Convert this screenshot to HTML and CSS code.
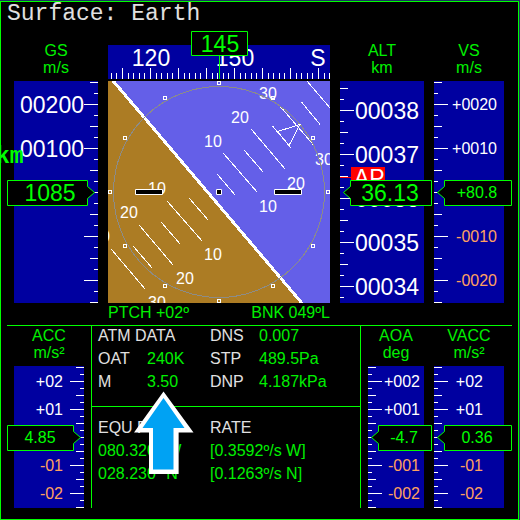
FILE: index.html
```html
<!DOCTYPE html>
<html lang="en">
<head>
<meta charset="utf-8">
<title>Surface: Earth</title>
<link rel="stylesheet" href="styles.css">
</head>
<body>
<main class="mfd">
  <h1 class="title">Surface: Earth</h1>

  <section class="flight">
    <div class="gauge raised">
      <h2 class="caption caption-gs">GS<br>m/s</h2>
      <svg class="tape" viewBox="7 81 91 222">
        <rect class="band" x="14" y="81" width="84" height="222"/>
        <path class="tick short" stroke-dasharray="1 10" d="M96 82V303"/>
        <path class="tick mid" stroke-dasharray="1 21" d="M94 82V303"/>
        <path class="tick major" stroke-dasharray="1 43" d="M91 104V303"/>
        <g class="big end">
          <text x="84" y="113">00200</text>
          <text x="84" y="157">00100</text>
        </g>
        <path class="readout" d="M7.500 180.500H87.500V186.500L94.500 192.500L87.500 198.500V205.500H7.500Z"/>
        <text class="big value" x="50" y="201">1085</text>
      </svg>
    </div>

    <div class="attitude">
      <svg class="compass" viewBox="108 31 222 48">
        <rect class="band" x="108" y="45" width="222" height="34"/>
        <path class="tick compass-short" stroke-dasharray="1 4.600" d="M110.800 76H330"/>
        <path class="tick compass-major" stroke-dasharray="1 27" d="M122 73.500H330"/>
        <g class="big middle">
          <text x="151" y="66">120</text>
          <text x="235" y="66">150</text>
          <text x="318" y="66">S</text>
        </g>
        <path class="readout" d="M191.500 31.500H247.500V55.500H191.500ZM219.500 55.500V79"/>
        <text class="big value" x="220" y="52">145</text>
      </svg>
      <svg class="horizon" viewBox="108 81 222 222">
        <rect class="sky" x="108" y="81" width="222" height="222"/>
        <path class="ground" d="M108 81H113.500L301.500 303H108Z"/>
        <path class="horizon-line" d="M111.500 79L303.500 305"/>
        <path class="ladder" d="M307 81L330 108M301.500 102L320 124.500M279 105L313.500 145M272.500 126L291.500 148.500M251.500 129.500L285.500 169.500M244.500 150.500L263.500 172.500M223.500 153.500L257.500 192.500M217.500 174.500L235.500 195.500M189.500 198.500L208.500 220.500M167.500 201.500L202.500 241.500M161.500 222.500L180.500 244.500M139.500 225.500L173.500 265.500M133.500 246.500L152.500 268.500M111.500 249.500L145.500 289.500"/>
        <g class="small middle">
          <text x="268" y="99">30</text>
          <text x="240" y="123">20</text>
          <text x="213" y="147">10</text>
          <text x="324" y="165">30</text>
          <text x="296" y="189">20</text>
          <text x="268" y="212">10</text>
          <text x="157" y="194">10</text>
          <text x="129" y="218">20</text>
          <text x="101" y="242">30</text>
          <text x="213" y="260">10</text>
          <text x="185" y="284">20</text>
          <text x="157" y="308">30</text>
        </g>
        <circle class="ring" cx="219" cy="192" r="105.500"/>
        <path class="ladder" d="M300 124.500L277.500 131.500L289 145.500Z"/>
        <path class="marker" d="M217.500 81.500h3v3h-3zM163.500 96.500h3v3h-3zM123.500 136.500h3v3h-3zM108.500 190.500h3v3h-3zM123.500 244.500h3v3h-3zM163.500 284.500h3v3h-3zM217.500 299.500h3v3h-3zM271.500 284.500h3v3h-3zM311.500 244.500h3v3h-3zM326.500 190.500h3v3h-3zM311.500 136.500h3v3h-3zM271.500 96.500h3v3h-3z"/>
        <path class="wings" d="M135.500 189.500h27v5h-27zM274.500 189.500h27v5h-27zM216.500 189.500h5v5h-5z"/>
      </svg>
      <div class="angles"><span>PTCH +02º</span><span>BNK 049ºL</span></div>
    </div>

    <div class="pair pair-top raised">
      <div class="gauge">
        <h2 class="caption caption-alt">ALT<br>km</h2>
        <svg class="tape" viewBox="340 81 94 222">
          <rect class="band" x="340" y="81" width="84" height="222"/>
          <path class="tick short" stroke-dasharray="1 10" d="M342 88V303"/>
          <path class="tick mid" stroke-dasharray="1 21" d="M344 88V303"/>
          <path class="tick major" stroke-dasharray="1 43" d="M347 110V303"/>
          <g class="big end">
            <text x="419" y="119">00038</text>
            <text x="419" y="163">00037</text>
            <text x="419" y="207">00036</text>
            <text x="419" y="251">00035</text>
            <text x="419" y="295">00034</text>
          </g>
          <path class="autopilot" d="M340 177H351V167H385V187H351V178H340Z"/>
          <text class="big" x="354" y="186">AP</text>
          <path class="readout" d="M350.500 180.500H431.500V205.500H350.500V198.500L343.500 192.500L350.500 186.500Z"/>
          <text class="big value" x="390" y="201">36.13</text>
        </svg>
      </div>
      <div class="gauge">
        <h2 class="caption caption-vs">VS<br>m/s</h2>
        <svg class="tape" viewBox="434 81 78 222">
          <rect class="band" x="434" y="81" width="70" height="222"/>
          <path class="tick short" stroke-dasharray="1 10" d="M436 82V303"/>
          <path class="tick mid" stroke-dasharray="1 21" d="M438 82V303"/>
          <path class="tick major" stroke-dasharray="1 43" d="M441 104V303"/>
          <g class="small end">
            <text x="497" y="110">+0020</text>
            <text x="497" y="154">+0010</text>
            <text class="negative" x="497" y="242">-0010</text>
            <text class="negative" x="497" y="286">-0020</text>
          </g>
          <path class="readout" d="M444.500 180.500H511.500V205.500H444.500V198.500L437.500 192.500L444.500 186.500Z"/>
          <text class="small value" x="477" y="198">+80.8</text>
        </svg>
      </div>
    </div>
  </section>

  <section class="lower">
    <div class="gauge">
      <h2 class="caption caption-acc">ACC<br>m/s²</h2>
      <svg class="tape" viewBox="7 366 84 142">
        <rect class="band" x="14" y="366" width="70" height="142"/>
        <path class="tick short" stroke-dasharray="1 6" d="M82 367V508"/>
        <path class="tick mid" stroke-dasharray="1 13" d="M80 367V508"/>
        <path class="tick major" stroke-dasharray="1 27" d="M77 381V508"/>
        <g class="small end">
          <text x="63" y="387">+02</text>
          <text x="63" y="415">+01</text>
          <text class="negative" x="63" y="471">-01</text>
          <text class="negative" x="63" y="499">-02</text>
        </g>
        <path class="readout" d="M7.500 425.500H73.500V431.500L80.500 437.500L73.500 443.500V450.500H7.500Z"/>
        <text class="small value" x="40" y="443">4.85</text>
      </svg>
    </div>

    <div class="data">
      <table class="readings atmosphere">
        <tr><th colspan="2">ATM DATA</th><th>DNS</th><td>0.007</td></tr>
        <tr><th class="key">OAT</th><td class="amount">240K</td><th class="key">STP</th><td>489.5Pa</td></tr>
        <tr><th>M</th><td>3.50</td><th>DNP</th><td>4.187kPa</td></tr>
      </table>
      <table class="readings position">
        <tr><th class="place">EQU POS</th><th>RATE</th></tr>
        <tr><td>080.320º W</td><td>[0.3592º/s W]</td></tr>
        <tr><td>028.230º N</td><td>[0.1263º/s N]</td></tr>
      </table>
      <svg class="pointer" viewBox="134 391 60 84" width="60" height="84">
        <path class="pointer-shade" d="M150 430H179V474H150Z"/>
        <path class="pointer-edge" d="M163.500 391.500L193.500 432.500H178V474H149V432.500H134Z"/>
        <path class="pointer-fill" d="M163.500 398L184.500 428H173.500V469.500H153V428H142.500Z"/>
      </svg>
    </div>

    <div class="pair pair-bottom">
      <div class="gauge">
        <h2 class="caption caption-aoa">AOA<br>deg</h2>
        <svg class="tape" viewBox="368 366 66 142">
          <rect class="band" x="368" y="366" width="56" height="142"/>
          <path class="tick short" stroke-dasharray="1 6" d="M370 367V508"/>
          <path class="tick mid" stroke-dasharray="1 13" d="M372 367V508"/>
          <path class="tick major" stroke-dasharray="1 27" d="M375 381V508"/>
          <g class="small end">
            <text x="420" y="387">+002</text>
            <text x="420" y="415">+001</text>
            <text class="negative" x="420" y="471">-001</text>
            <text class="negative" x="420" y="499">-002</text>
          </g>
          <path class="readout" d="M378.500 425.500H431.500V450.500H378.500V443.500L371.500 437.500L378.500 431.500Z"/>
          <text class="small value" x="404" y="443">-4.7</text>
        </svg>
      </div>
      <div class="gauge">
        <h2 class="caption caption-vs">VACC<br>m/s²</h2>
        <svg class="tape" viewBox="434 366 78 142">
          <rect class="band" x="434" y="366" width="70" height="142"/>
          <path class="tick short" stroke-dasharray="1 6" d="M436 367V508"/>
          <path class="tick mid" stroke-dasharray="1 13" d="M438 367V508"/>
          <path class="tick major" stroke-dasharray="1 27" d="M441 381V508"/>
          <g class="small end">
            <text x="483" y="387">+02</text>
            <text x="483" y="415">+01</text>
            <text class="negative" x="483" y="471">-01</text>
            <text class="negative" x="483" y="499">-02</text>
          </g>
          <path class="readout" d="M444.500 425.500H511.500V450.500H444.500V443.500L437.500 437.500L444.500 431.500Z"/>
          <text class="small value" x="477" y="443">0.36</text>
        </svg>
      </div>
    </div>
  </section>

  <span class="range-unit">km</span>
</main>
</body>
</html>
```
FILE: styles.css
```css
* {
  box-sizing: border-box;
}

body {
  margin: 0;
  padding: 1px 1px 0 0;
  background: #1c3260;
  color: #00f000;
  font: 16px/19px "Liberation Sans", Arial, sans-serif;
}

.mfd {
  position: relative;
  min-height: calc(100vh - 1px);
  padding: 0 6px;
  overflow: hidden;
  border: 1px solid #00ff00;
  background: #000;
}

.title {
  margin: 0 0 5px;
  color: #e0e0e0;
  font: 23px/24px "Liberation Mono", "Courier New", monospace;
}

/* Upper instruments */
.flight {
  display: grid;
  grid-template-columns: minmax(0, 91fr) minmax(0, 222fr) minmax(0, 172fr);
  column-gap: 10px;
  padding-bottom: 3px;
}

.raised {
  padding-top: 11px;
}

.pair {
  display: grid;
}

.pair-top {
  grid-template-columns: minmax(0, 94fr) minmax(0, 78fr);
}

.pair-bottom {
  grid-template-columns: minmax(0, 66fr) minmax(0, 78fr);
  padding-left: 7px;
}

.caption {
  margin: 0 0 5px;
  font-size: 16px;
  font-weight: normal;
  line-height: 17px;
  text-align: center;
}

.caption-gs,
.caption-acc {
  padding-left: 7px;
}

.caption-acc {
  padding-right: 7px;
}

.caption-alt,
.caption-aoa {
  padding-right: 10px;
}

.caption-vs {
  padding-right: 8px;
}

svg {
  display: block;
}

.tape,
.compass,
.horizon {
  width: 100%;
  height: auto;
}

.compass {
  margin-bottom: 2px;
}

.angles {
  display: flex;
  justify-content: space-between;
}

/* Lower instruments */
.lower {
  display: grid;
  grid-template-columns: minmax(0, 84fr) minmax(0, 270fr) minmax(0, 151fr);
  border-top: 1px solid #00ff00;
}

.lower .caption {
  padding-top: 1px;
}

.data {
  position: relative;
  border: solid #00ff00;
  border-width: 0 1px;
}

.readings {
  width: 100%;
  border-collapse: collapse;
  table-layout: auto;
}

.readings th,
.readings td {
  padding: 0 0 4px;
  font-weight: normal;
  text-align: left;
  white-space: nowrap;
}

.readings th {
  color: #e0e0e0;
}

.readings tr > :first-child {
  padding-left: 6px;
}

.atmosphere {
  margin-bottom: 11px;
}

.atmosphere .key {
  width: 49px;
}

.atmosphere .key:first-child {
  width: 55px;
}

.atmosphere .amount {
  width: 63px;
}

.position {
  border-top: 1px solid #00ff00;
}

.position tr:first-child > * {
  padding-top: 11px;
}

.position .place {
  width: 118px;
}

/* Drawing styles */
.band {
  fill: #0000a0;
}

.tick {
  fill: none;
  stroke: #fff;
  shape-rendering: crispEdges;
}

.short {
  stroke-width: 4px;
}

.mid {
  stroke-width: 8px;
}

.major {
  stroke-width: 14px;
}

.compass-short {
  stroke-width: 6px;
}

.compass-major {
  stroke-width: 11px;
}

.big {
  fill: #fff;
  font-size: 23px;
}

.small {
  fill: #fff;
  font-size: 16px;
}

.end {
  text-anchor: end;
}

.middle {
  text-anchor: middle;
}

.negative {
  fill: #ffa060;
}

.readout {
  fill: #000;
  stroke: #00ff00;
}

.value {
  fill: #00ff00;
  text-anchor: middle;
}

.autopilot {
  fill: #ff0000;
}

.sky {
  fill: #645fe8;
}

.ground {
  fill: #ac7c24;
}

.horizon-line {
  fill: none;
  stroke: #fff;
  stroke-width: 3px;
  shape-rendering: crispEdges;
}

.ladder,
.marker {
  fill: none;
  stroke: #fff;
  shape-rendering: crispEdges;
}

.ring {
  fill: none;
  stroke: #8c8c88;
  shape-rendering: crispEdges;
}

.wings {
  fill: #000;
  stroke: #fff;
}

/* Overlays */
.pointer {
  position: absolute;
  top: 65px;
  left: 42px;
}

.pointer-shade {
  fill: #a0a0a0;
}

.pointer-edge {
  fill: #fff;
}

.pointer-fill {
  fill: #00a2f3;
}

.range-unit {
  position: absolute;
  top: 143px;
  left: -5px;
  color: #00ff00;
  font: bold 23px/24px "Liberation Mono", "Courier New", monospace;
}
```
